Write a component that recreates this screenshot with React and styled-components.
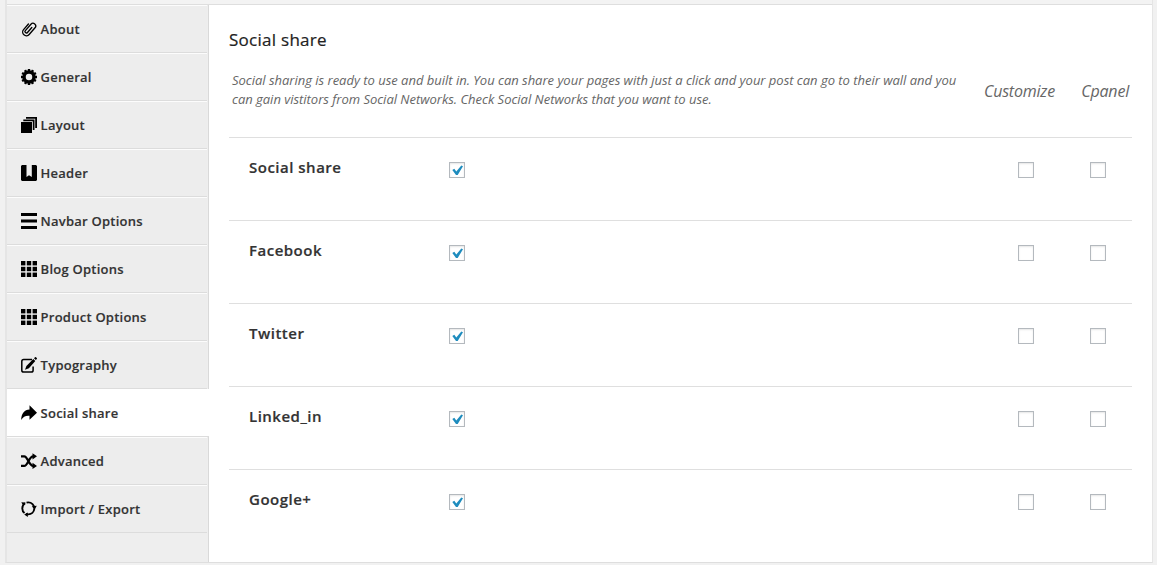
import React from "react";
import styled, { createGlobalStyle } from "styled-components";

const GlobalStyle = createGlobalStyle`
  *, *::before, *::after { box-sizing: border-box; }
  html, body { margin: 0; height: 100%; background: #f1f1f1; overflow: hidden; }
  body { font-family: "Open Sans", "Noto Sans", sans-serif; color: #333; font-size: 13px; }
`;

const Page = styled.div`
  height: 565px;
  padding: 0 4px 0 5px;
`;
const Panel = styled.div`
  height: 563px;
  border: 0 solid #e5e5e5;
  border-width: 0 1px 1px 2px;
  border-bottom-color: #dedede;
  display: flex;
  flex-direction: column;
`;
const TopBar = styled.div`
  height: 5px;
  flex: none;
  background: #f3f3f3;
  border-bottom: 1px solid #dedede;
`;
const Body = styled.div`
  flex: 1;
  display: flex;
  background: #fff;
`;
const Sidebar = styled.nav`
  width: 202px;
  flex: none;
  background: #eee;
  border-right: 1px solid #d9d9d9;
`;
const Item = styled.a`
  display: flex;
  align-items: center;
  width: ${(p) => (p.$active ? 202 : 200)}px;
  height: 48px;
  padding: 0 0 0 14px;
  gap: 3.6px;
  background: ${(p) => (p.$active ? "#fff" : "#ededed")};
  border-top: 1px solid ${(p) => (p.$active ? "#fff" : "#fcfcfc")};
  border-bottom: 1px solid #dcdcdc;
  font-weight: 600;
  font-size: 13px;
  line-height: 18px;
  letter-spacing: 0.24px;
  color: #333;
  -webkit-text-stroke: 0.15px #333;
`;
const Icon = styled.svg`
  width: 16px;
  height: 16px;
  flex: none;
  fill: #000;
`;
const Main = styled.main`
  flex: 1;
  padding: 22px 20px 0;
`;
const Title = styled.h3`
  margin: 0;
  font-size: 17px;
  line-height: 26px;
  font-weight: 400;
  letter-spacing: 0.27px;
  color: #222;
  -webkit-text-stroke: 0.2px #222;
`;
const Intro = styled.div`
  display: flex;
  height: 84px;
  padding: 18px 3px 0;
  font-style: italic;
  color: #666;
`;
const Description = styled.p`
  margin: 0;
  width: 734px;
  font-size: 13px;
  line-height: 19px;
  letter-spacing: -0.014px;
`;
const ColumnName = styled.span`
  font-size: 16px;
  line-height: 24px;
  padding-top: 8px;
  width: ${(p) => p.$width}px;
  text-align: right;
  letter-spacing: -0.2px;
`;
const Row = styled.div`
  display: grid;
  grid-template-columns: 200px 569px 72px 1fr;
  height: 83px;
  padding: 19px 0 0 20px;
  border-top: 1px solid #dfdfdf;
`;
const RowLabel = styled.span`
  font-size: 15px;
  font-weight: 600;
  line-height: 20px;
  letter-spacing: 0.5px;
  color: #333;
  -webkit-text-stroke: 0.2px #333;
`;
const Checkbox = styled.span`
  width: 16px;
  height: 16px;
  margin-top: 5px;
  display: flex;
  border: 1px solid #b4b9be;
  background: #fff;
  box-shadow: inset 0 1px 2px rgba(0, 0, 0, 0.1);
`;
const Tick = styled.svg`
  width: 14px;
  height: 14px;
  fill: #1e8cbe;
`;

const cells = [0, 5.8, 11.6];
const grid = cells.flatMap((y) =>
  cells.map((x) => <rect key={`${x}-${y}`} x={x} y={y} width="4.4" height="4.4" />)
);

const icons = {
  clip: (
    <path
      d="M4.3 4.6V12a3.7 3.7 0 0 0 7.4 0V3.1a2.7 2.7 0 0 0-5.4 0V11.6a1.4 1.4 0 0 0 2.8 0V5"
      transform="rotate(41 8 8)" fill="none" stroke="#000" strokeWidth="1.35" strokeLinecap="round"
    />
  ),
  gear: (
    <>
      <circle cx="8" cy="8" r="5" fill="none" stroke="#000" strokeWidth="3.5" />
      {[0, 30, 60, 90, 120, 150].map((a) => (
        <path key={a} transform={`rotate(${a} 8 8)`} d="M6.8 0h2.4v2H6.8zM6.8 14h2.4v2H6.8z" />
      ))}
    </>
  ),
  layers: <path d="M0 5h11v11H0zM2.3 2.6h11.2V13H11.8V4.2H2.3zM5 0h11v11h-1.8V1.7H5z" />,
  bookmark: <path d="M1 0h4.5v12L8 10.2l2.8 1.8V0H15l1 1v14l-1 1H1l-1-1V1z" />,
  menu: <path d="M0 0h16v3H0zM0 6.5h16v3H0zM0 13h16v3H0z" />,
  grid,
  edit: (
    <>
      <path d="M11 2.5H2.7Q.8 2.5.8 4.4v8.8q0 1.9 1.9 1.9h7.6q1.8 0 1.8-1.9V9.5" fill="none" stroke="#000" strokeWidth="1.5" />
      <path d="m12.3 2 2 2-6.4 7.3-3.9 1.4 1.4-3.8zM13 1.2l1-1q.5-.3 1 .1l.8.8q.4.5 0 1l-1 1z" />
    </>
  ),
  share: <path d="M8.5.3 16 7.8l-7.5 6.9v-4C4.8 10.3 2 11.5.2 15 .2 8.4 3.4 4.7 8.5 4.4z" />,
  shuffle: (
    <>
      <path d="M0 3.3h3.2c3.7 0 4.6 9.6 9 9.6M0 12.9h3.2c3.7 0 4.6-9.6 9-9.6" fill="none" stroke="#000" strokeWidth="2.3" />
      <path d="M11.5.2 16 3.3l-4.5 3.2zM11.5 9.7l4.5 3.2-4.5 3.1z" />
    </>
  ),
  cycle: (
    <>
      <circle cx="7.3" cy="7.4" r="6" fill="none" stroke="#000" strokeWidth="1.9" strokeDasharray="11.1 1.46" strokeDashoffset="-.6" />
      <path d="M.3 1.3 4.6 1.4 2.4 5zM10.8 5.2l5-.4-2.2 3.9zM6.8 11.6v4.3L3.2 13.6z" />
    </>
  ),
};

const sections = [
  ["About", "clip"],
  ["General", "gear"],
  ["Layout", "layers"],
  ["Header", "bookmark"],
  ["Navbar Options", "menu"],
  ["Blog Options", "grid"],
  ["Product Options", "grid"],
  ["Typography", "edit"],
  ["Social share", "share"],
  ["Advanced", "shuffle"],
  ["Import / Export", "cycle"],
];
const networks = ["Social share", "Facebook", "Twitter", "Linked_in", "Google+"];

function Check({ checked }) {
  return (
    <Checkbox role="checkbox" aria-checked={!!checked}>
      {checked && (
        <Tick viewBox="0 0 14 14">
          <path d="m2.3 7 2-1.2 2 2.7 5-6L13 3.2 7.7 12H6z" />
        </Tick>
      )}
    </Checkbox>
  );
}

export default function App() {
  return (
    <Page>
      <GlobalStyle />
      <Panel>
        <TopBar />
        <Body>
          <Sidebar>
            {sections.map(([label, icon]) => (
              <Item key={label} $active={icon === "share"}>
                <Icon viewBox="0 0 16 16">{icons[icon]}</Icon>
                {label}
              </Item>
            ))}
          </Sidebar>
          <Main>
            <Title>Social share</Title>
            <Intro>
              <Description>
                Social sharing is ready to use and built in. You can share your pages with just a click and your post can go to their wall and you can gain vistitors from Social Networks. Check Social Networks that you want to use.
              </Description>
              <ColumnName $width={89}>Customize</ColumnName>
              <ColumnName $width={74}>Cpanel</ColumnName>
            </Intro>
            {networks.map((name) => (
              <Row key={name}>
                <RowLabel>{name}</RowLabel>
                <Check checked />
                <Check />
                <Check />
              </Row>
            ))}
          </Main>
        </Body>
      </Panel>
    </Page>
  );
}
